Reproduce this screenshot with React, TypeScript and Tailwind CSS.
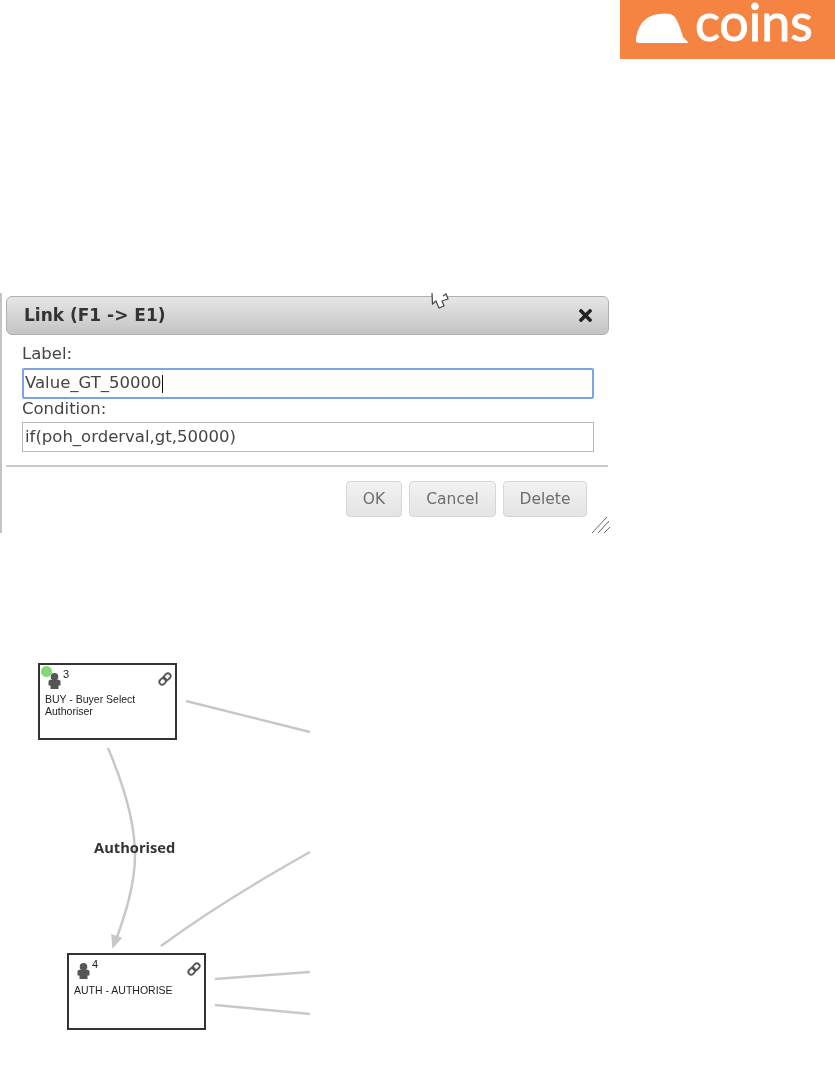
import { FaTimes } from "react-icons/fa";

function Logo() {
  return (
    <div className="flex justify-end">
      <div className="w-[215px] h-[59px] bg-[#f58442] flex items-start">
        <svg width="54" height="31" viewBox="0 0 54 31" className="ml-[15px] mt-[13px] shrink-0">
          <path d="M1 29 L1 25 C2 20 3 17 5 13 C9 6 15 2 24 1 C29 0 36 0 39 3 C43 8 46 17 48 24 L53 29 L53 30 C40 30 30 30 22 30 C14 30 6 30 4 30 Z" fill="#ffffff" />
        </svg>
        <span className="ml-[6px] mt-[1px] text-[52px] leading-[40px] text-white font-['Lato',sans-serif] font-normal [-webkit-text-stroke:1px_white]">coins</span>
      </div>
    </div>
  );
}

function Btn({ label, w }: { label: string; w: string }) {
  return (
    <div className={`${w} h-[36px] rounded-[4px] border border-[#d6d6d6] bg-gradient-to-b from-[#f2f2f2] to-[#e4e4e4] flex items-center justify-center pt-[1px] text-[#6e6e6e] text-[15.5px]`}>
      {label}
    </div>
  );
}

function Dialog() {
  return (
    <div className="relative mt-[234px] w-[612px] h-[240px] border-l-2 border-[#c4c4c4] pt-[3px] font-['DejaVu_Sans',sans-serif]">
      <div className="ml-[4px] w-[603px] h-[39px] rounded-[6px] border border-[#b0b0b0] bg-gradient-to-b from-[#e6e6e6] to-[#c4c4c4] flex items-center justify-between pl-[17px] pr-[13px]">
        <span className="font-bold text-[17px] text-[#333333]">Link (F1 -&gt; E1)</span>
        <FaTimes className="text-[#222222] text-[19px]" />
      </div>
      <div className="ml-[20px] w-[572px] text-[16.5px] text-[#444444]">
        <div className="h-[20px] mt-[9px] leading-[20px]">Label:</div>
        <div className="h-[31px] mt-[4px] border-2 border-[#7aa5e6] rounded-[2px] flex items-center px-[1px] leading-none">
          Value_GT_50000<span className="w-px h-[18px] bg-[#111111]" />
        </div>
        <div className="h-[20px] leading-[20px]">Condition:</div>
        <div className="h-[30px] mt-[3px] border border-[#b8b8b8] flex items-center px-[2px] leading-none">
          if(poh_orderval,gt,50000)
        </div>
      </div>
      <div className="ml-[4px] w-[602px] mt-[13px] h-[2px] bg-[#c8c8c8]" />
      <div className="mt-[14px] ml-[344px] flex gap-[7px]">
        <Btn label="OK" w="w-[56px]" />
        <Btn label="Cancel" w="w-[87px]" />
        <Btn label="Delete" w="w-[84px]" />
      </div>
      <svg width="22" height="18" viewBox="0 0 22 18" className="absolute left-[588px] top-[223px]">
        <path d="M2 17 L17 1 M8 17 L19 5 M14 17 L20 11" stroke="#666666" strokeWidth="1" fill="none" />
      </svg>
      <svg width="22" height="18" viewBox="0 0 22 18" className="absolute left-[427px] top-[-1px]">
        <path d="M3 1 L3.5 12 L7 9 L10 16 L15 14 L13 9 L19 7 L17 2 L14 4" stroke="#444444" strokeWidth="1.2" fill="#ffffff" />
      </svg>
    </div>
  );
}

function Person({ className }: { className: string }) {
  return (
    <svg width="13" height="16" viewBox="0 0 13 16" className={className}>
      <circle cx="6.5" cy="3.8" r="3.8" fill="#555555" />
      <path d="M0.5 8.5 C0.5 7.4 1.8 6.8 3 6.8 L10 6.8 C11.2 6.8 12.5 7.4 12.5 8.5 L12.5 12.5 L10.5 12.5 L10.5 16 L2.5 16 L2.5 12.5 L0.5 12.5 Z" fill="#555555" />
    </svg>
  );
}

function Chain({ className }: { className: string }) {
  return (
    <svg width="14" height="14" viewBox="0 0 15 15" className={className}>
      <g fill="none" stroke="#555555" strokeWidth="2" transform="rotate(-45 7.5 7.5)">
        <rect x="0.2" y="4.6" width="8" height="5.8" rx="2.9" />
        <rect x="6.8" y="4.6" width="8" height="5.8" rx="2.9" />
      </g>
    </svg>
  );
}

function Node({ pos, num, text, dot }: { pos: string; num: string; text: React.ReactNode; dot?: boolean }) {
  return (
    <div className={`absolute ${pos} w-[139px] h-[77px] border-2 border-[#333333] bg-white font-['Liberation_Sans',sans-serif] text-[#222222]`}>
      {dot && <span className="absolute left-[1px] top-[1px] w-[11px] h-[11px] rounded-full bg-[#86d86e]" />}
      <Person className="absolute left-[8px] top-[8px]" />
      <span className="absolute left-[23px] top-[3px] text-[11px] leading-[13px]">{num}</span>
      <Chain className="absolute left-[118px] top-[7px]" />
      <div className="absolute left-[5px] top-[28px] text-[10.5px] leading-[12px]">{text}</div>
    </div>
  );
}

function Diagram() {
  return (
    <div className="relative mt-[127px] w-[835px] h-[376px]">
      <svg width="320" height="376" viewBox="0 660 320 376" className="absolute left-0 top-0">
        <g stroke="#c8c8c8" strokeWidth="2.5" fill="none">
          <path d="M186 701 L310 732" />
          <path d="M108 748 C130 800 135 835 135 855 C135 885 125 915 116 940" />
          <path d="M161 946 C210 910 260 880 310 852" />
          <path d="M215 979 L310 972" />
          <path d="M215 1005 L310 1014" />
        </g>
        <path d="M113 947 L112 935 L121 938 Z" fill="#c8c8c8" stroke="#c8c8c8" strokeWidth="1.5" />
      </svg>
      <span className="absolute left-[94px] top-[178px] text-[14.7px] leading-[18px] font-bold text-[#333333] font-['Open_Sans',sans-serif]">Authorised</span>
      <Node pos="left-[38px] top-[3px]" num="3" dot text={<>BUY - Buyer Select<br />Authoriser</>} />
      <Node pos="left-[67px] top-[293px]" num="4" text={<span className="relative top-[1px]">AUTH - AUTHORISE</span>} />
    </div>
  );
}

export default function App() {
  return (
    <div className="w-[835px] h-[1069px] bg-white overflow-hidden blur-[0.4px]">
      <Logo />
      <Dialog />
      <Diagram />
    </div>
  );
}
